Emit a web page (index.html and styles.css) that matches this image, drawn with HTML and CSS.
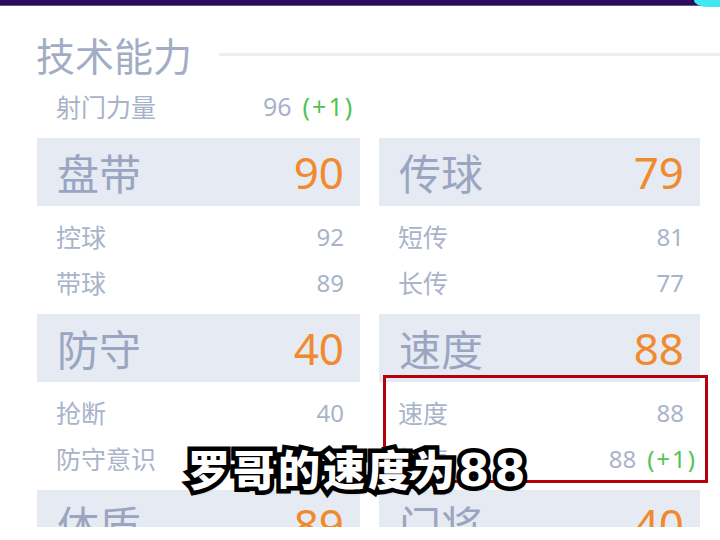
FILE: index.html
```html
<!DOCTYPE html>
<html lang="zh">
<head>
<meta charset="utf-8">
<link rel="stylesheet" href="styles.css">
</head>
<body>
<div class="frame">
  <div class="topbar"><span class="topbar-corner"></span></div>
  <div class="header">
    <span class="header-title">技术能力</span>
    <span class="header-line"></span>
  </div>
  <div class="shot">
    <span class="shot-label">射门力量</span>
    <span class="shot-value">96<span class="plus">(+1)</span></span>
  </div>
  <div class="grid">
    <div class="group">
      <div class="band"><span class="band-label">盘带</span><span class="band-value">90</span></div>
      <div class="rows">
        <div class="row"><span>控球</span><span class="num">92</span></div>
        <div class="row"><span>带球</span><span class="num">89</span></div>
      </div>
    </div>
    <div class="group">
      <div class="band"><span class="band-label">传球</span><span class="band-value">79</span></div>
      <div class="rows">
        <div class="row"><span>短传</span><span class="num">81</span></div>
        <div class="row"><span>长传</span><span class="num">77</span></div>
      </div>
    </div>
    <div class="group">
      <div class="band"><span class="band-label">防守</span><span class="band-value">40</span></div>
      <div class="rows">
        <div class="row"><span>抢断</span><span class="num">40</span></div>
        <div class="row"><span>防守意识</span><span class="num">40</span></div>
      </div>
    </div>
    <div class="group group-highlight">
      <div class="band"><span class="band-label">速度</span><span class="band-value">88</span></div>
      <div class="rows">
        <div class="row"><span>速度</span><span class="num">88</span></div>
        <div class="row"><span>加速</span><span class="num num-wide">88<span class="plus">(+1)</span></span></div>
      </div>
      <div class="redbox"></div>
    </div>
    <div class="group">
      <div class="band"><span class="band-label">体质</span><span class="band-value">89</span></div>
    </div>
    <div class="group">
      <div class="band"><span class="band-label">门将</span><span class="band-value">40</span></div>
    </div>
  </div>
  <div class="caption">罗哥的速度为<span class="caption-num">88</span></div>
</div>
</body>
</html>
```
FILE: styles.css
```css
* { box-sizing: border-box; }
html, body {
  margin: 0;
  padding: 0;
  background: #ffffff;
}
body {
  width: 720px;
  height: 540px;
  overflow: hidden;
  font-family: "Noto Sans CJK SC", "Noto Sans", sans-serif;
  color: #a8b2c9;
}
.frame {
  position: relative;
  width: 720px;
  height: 527px;
  overflow: hidden;
  background: #fff;
}
.topbar {
  position: relative;
  height: 6px;
  background: #2c0a5c;
  border-bottom: 1px solid #6a4f98;
}
.topbar-corner {
  position: absolute;
  right: 0;
  top: 0;
  width: 26px;
  height: 7px;
  background: #3ee8f0;
  border-bottom-left-radius: 14px 7px;
}
.header {
  display: flex;
  align-items: center;
  padding-left: 36px;
  margin-top: 27px;
  height: 42px;
}
.header-title {
  font-size: 39px;
  line-height: 42px;
  color: #a2adc5;
}
.header-line {
  flex: 1;
  height: 3px;
  margin-left: 27px;
  background: #eceef4;
}
.shot {
  display: flex;
  align-items: center;
  height: 30px;
  margin-top: 16px;
  padding-left: 56px;
  font-size: 25px;
}
.shot-label {
  width: 207px;
  color: #a8b2c9;
}
.shot-value {
  color: #a8b2c9;
  font-family: "Noto Sans", sans-serif;
  font-size: 25px;
}
.plus {
  color: #4fc452;
  font-family: "Noto Sans", sans-serif;
  margin-left: 11px;
  letter-spacing: 2px;
}
.grid {
  display: grid;
  grid-template-columns: 323px 321px;
  column-gap: 19px;
  row-gap: 9px;
  margin-top: 17px;
  padding-left: 37px;
}
.group {
  position: relative;
}
.band {
  display: flex;
  align-items: center;
  justify-content: space-between;
  height: 68px;
  background: #e6ebf3;
  padding: 0 16px 0 20px;
}
.band-label {
  font-size: 42px;
  color: #9aa6c1;
  line-height: 1;
}
.band-value {
  font-family: "Noto Sans", sans-serif;
  font-size: 44px;
  color: #f08a2e;
  line-height: 1;
}
.rows {
  padding-top: 7px;
}
.row {
  display: flex;
  align-items: center;
  justify-content: space-between;
  height: 46px;
  padding: 0 16px 0 19px;
  font-size: 25px;
  color: #a9b3ca;
}
.num {
  font-family: "Noto Sans", sans-serif;
  font-size: 24px;
  color: #a9b3ca;
}
.num-wide {
  margin-right: -13px;
}
.redbox {
  position: absolute;
  left: 4px;
  top: 61px;
  width: 325px;
  height: 108px;
  border: 3px solid #b5000e;
}
.caption {
  position: absolute;
  left: 188px;
  top: 440px;
  font-family: "Noto Sans CJK SC", sans-serif;
  font-weight: 900;
  font-size: 42px;
  line-height: 56px;
  letter-spacing: 3px;
  color: #ffffff;
  -webkit-text-stroke: 9px #000;
  paint-order: stroke fill;
  text-shadow: 2px 3px 3px rgba(0,0,0,0.6);
}
.caption-num {
  font-family: "DejaVu Sans", sans-serif;
  font-weight: 700;
  font-size: 45px;
  letter-spacing: 5px;
}
```
